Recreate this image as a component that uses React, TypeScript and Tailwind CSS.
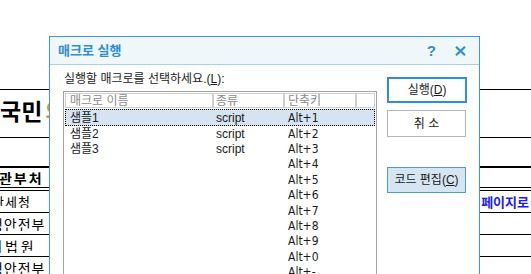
import React from 'react';

const FONT = { fontFamily: '"Liberation Sans", "Noto Sans CJK KR", sans-serif' };
const NARROW = { fontFamily: '"Liberation Sans Narrow", "DejaVu Sans Condensed", "Liberation Sans", "Noto Sans CJK KR", sans-serif' };

interface MacroRow {
    name: string;
    kind: string;
    key: string;
}

const rows: MacroRow[] = [
    { name: '샘플1', kind: 'script', key: 'Alt+1' },
    { name: '샘플2', kind: 'script', key: 'Alt+2' },
    { name: '샘플3', kind: 'script', key: 'Alt+3' },
    { name: '', kind: '', key: 'Alt+4' },
    { name: '', kind: '', key: 'Alt+5' },
    { name: '', kind: '', key: 'Alt+6' },
    { name: '', kind: '', key: 'Alt+7' },
    { name: '', kind: '', key: 'Alt+8' },
    { name: '', kind: '', key: 'Alt+9' },
    { name: '', kind: '', key: 'Alt+0' },
    { name: '', kind: '', key: 'Alt+-' },
];

function BackgroundDoc() {
    return (
        <div className="pt-[89px] text-black" style={{ fontFamily: '"Noto Sans CJK KR", sans-serif' }}>
            <div className="h-[48px] border-t border-black flex items-center pb-[6px]">
                <span className="text-[23px] font-bold leading-none">국민</span>
                <span className="text-[23px] font-bold leading-none text-[#f08a1c] ml-[3px]">의</span>
            </div>
            <div className="h-[29px] border-t border-black" />
            {/* 표 머리 */}
            <div className="h-[21px] border-t-2 border-black flex items-center">
                <div className="w-[49px] overflow-hidden">
                    <div className="-ml-[16px] whitespace-nowrap text-[14px] font-bold tracking-[2px] leading-none">소관부처</div>
                </div>
            </div>
            <div className="h-[3px] border-t border-black" />
            <div className="h-[22px] border-t border-black flex items-center justify-between">
                <div className="w-[49px] overflow-hidden">
                    <div className="-ml-[8px] whitespace-nowrap text-[13px] tracking-[1px] leading-none">관세청</div>
                </div>
                <div className="pr-[2px] text-[13px] font-bold leading-none text-[#1c1cf2] whitespace-nowrap">페이지로</div>
            </div>
            <div className="h-[22px] border-t border-black flex items-center">
                <div className="w-[49px] overflow-hidden">
                    <div className="-ml-[24px] whitespace-nowrap text-[14px] tracking-[1px] leading-none">행정안전부</div>
                </div>
            </div>
            <div className="h-[22px] border-t border-black flex items-center">
                <div className="w-[49px] overflow-hidden">
                    <div className="-ml-[11px] whitespace-nowrap text-[14px] tracking-[3px] leading-none">대법원</div>
                </div>
            </div>
            <div className="h-[22px] border-t border-black flex items-center">
                <div className="w-[49px] overflow-hidden">
                    <div className="-ml-[24px] whitespace-nowrap text-[14px] tracking-[1px] leading-none">행정안전부</div>
                </div>
            </div>
        </div>
    );
}

export default function App() {
    return (
        <div className="relative w-[531px] h-[274px] overflow-hidden bg-white">
            <BackgroundDoc />

            {/* 매크로 실행 대화상자 */}
            <div
                className="absolute left-[49px] top-[36px] w-[431px] h-[250px] border border-[#3c9ad6] bg-white flex flex-col text-[#1a1a1a]"
                style={FONT}
            >
                <div className="h-[28px] shrink-0 border-b border-[#a8d0ea] bg-[#eff7fb] flex items-center pl-[8px] pr-[13px]">
                    <span className="text-[13px] font-bold text-[#2b8fd2] leading-none">매크로 실행</span>
                    <span className="ml-auto text-[15px] font-bold text-[#2b8fd2] leading-none">?</span>
                    <svg className="ml-[19px]" width="11" height="10" viewBox="0 0 11 10">
                        <path d="M1 0.8 L10 9.2 M10 0.8 L1 9.2" stroke="#2b8fd2" strokeWidth="2.2" fill="none" />
                    </svg>
                </div>

                <div className="flex flex-1">
                    {/* 목록 */}
                    <div className="pl-[13px] pt-[6px]">
                        <div className="h-4 leading-4 text-[12px] ml-px whitespace-nowrap">
                            실행할 매크로를 선택하세요.(<span className="underline">L</span>):
                        </div>
                        <div className="mt-[4px] w-[314px] h-[200px] border border-[#a3a3a3] p-px text-[12px]">
                            <div className="flex h-[15px] text-[#8a8a8a] leading-none">
                                <div className="w-[148px] border border-[#cfcfcf] pl-[4px] flex items-center">매크로 이름</div>
                                <div className="w-[71px] border border-[#cfcfcf] pl-[2px] flex items-center">종류</div>
                                <div className="w-[72px] border border-[#cfcfcf] pl-[3px] flex items-center">단축키</div>
                                <div className="flex-1 border border-[#cfcfcf]" />
                            </div>
                            <div className="mt-px">
                                {rows.map((r, i) => (
                                    <div
                                        key={r.key}
                                        className={
                                            i === 0
                                                ? 'flex items-center h-[17px] border border-dotted border-black bg-[#d6e4f2] leading-none'
                                                : 'flex items-center h-[15.4px] border border-transparent leading-none'
                                        }
                                    >
                                        <div className="w-[147px] pl-[4px] whitespace-nowrap">{r.name}</div>
                                        <div className="w-[71px] pl-[3px] whitespace-nowrap">{r.kind}</div>
                                        <div className="w-[72px] pl-[4px] whitespace-nowrap" style={NARROW}>{r.key}</div>
                                    </div>
                                ))}
                            </div>
                        </div>
                    </div>

                    {/* 버튼 */}
                    <div className="ml-[10px] pt-[12px] flex flex-col text-[12px] leading-none">
                        <button className="w-[80px] h-[26px] border-2 border-[#2e8fd6] bg-white flex items-center justify-center">
                            실행(<span className="underline">D</span>)
                        </button>
                        <button className="mt-[7px] w-[79px] h-[27px] border border-[#b5b5b5] bg-white flex items-center justify-center">
                            취 소
                        </button>
                        <button className="mt-[30px] w-[79px] h-[26px] border border-[#4c9bd2] bg-[#d6e5f2] flex items-center justify-center">
                            코드 편집(<span className="underline">C</span>)
                        </button>
                    </div>
                </div>
            </div>
        </div>
    );
}
